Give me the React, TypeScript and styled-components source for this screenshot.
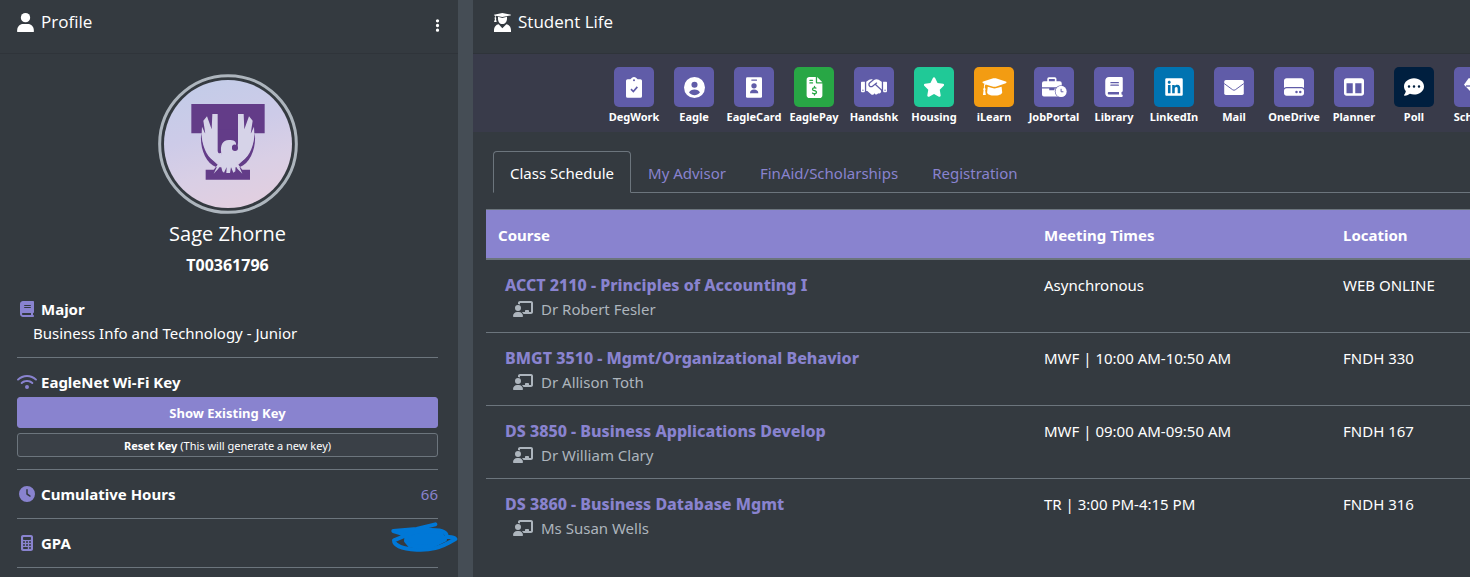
import React from "react";
import type { ReactNode } from "react";
import styled, { createGlobalStyle } from "styled-components";
import {
  FaBook,
  FaCalculator,
  FaChalkboardUser,
  FaClock,
  FaCommentDots,
  FaEllipsisVertical,
  FaFileInvoiceDollar,
  FaHandshake,
  FaHardDrive,
  FaLinkedin,
  FaStar,
  FaTableColumns,
  FaWifi,
} from "react-icons/fa6";

const color = {
  page: "#454d55",
  card: "#343a40",
  line: "#6c757d",
  accent: "#8983cf",
  tile: "#605ca8",
  strip: "#393b4a",
  muted: "#adb5bd",
  white: "#ffffff",
};

const GlobalStyle = createGlobalStyle`
  *, *::before, *::after { box-sizing: border-box; }
  body {
    margin: 0;
    background: ${color.page};
    color: ${color.white};
    font-family: "Noto Sans", "Open Sans", sans-serif;
    font-size: 15px;
    line-height: 24px;
    overflow: hidden;
  }
`;

const Page = styled.div`
  display: flex;
  gap: 15px;
  min-height: 100vh;
`;

const Card = styled.section`
  background: ${color.card};
  min-width: 0;
`;

const ProfileCard = styled(Card)`
  flex: 0 0 458px;
`;

const LifeCard = styled(Card)`
  flex: 1;
  overflow: hidden;
`;

const CardHeader = styled.header`
  display: flex;
  justify-content: space-between;
  height: 54px;
  padding: 10px 13px 0 17px;
  border-bottom: 1px solid #2f343a;
`;

const LifeHeader = styled(CardHeader)`
  padding-left: 21px;
`;

const CardTitle = styled.h2`
  display: flex;
  align-items: center;
  gap: 7px;
  margin: 0;
  height: 24px;
  font-family: "Open Sans", sans-serif;
  font-size: 17px;
  font-weight: 400;
`;

const MenuButton = styled.button`
  display: flex;
  align-items: center;
  height: 31px;
  padding: 0;
  border: 0;
  background: none;
  color: ${color.white};
`;

const ProfileBody = styled.div`
  padding: 20px 20px 0 17px;
`;

const Identity = styled.div`
  display: flex;
  flex-direction: column;
  align-items: center;
  margin-bottom: 20px;
`;

const Name = styled.h3`
  margin: 6px 0 5px;
  font-family: "Open Sans", sans-serif;
  font-size: 20px;
  line-height: 28px;
  font-weight: 400;
`;

const StudentId = styled.p`
  margin: 0;
  font-size: 16px;
  font-weight: 700;
`;

const Item = styled.div`
  padding-bottom: 12px;
  margin-bottom: 12px;
  border-bottom: 1px solid ${color.line};
`;

const ItemRow = styled.div`
  display: flex;
  justify-content: space-between;
`;

const ItemTitle = styled.h4`
  display: flex;
  align-items: center;
  gap: 4px;
  margin: 0;
  font-size: 15px;
  font-weight: 700;
`;

const IconSlot = styled.span`
  display: flex;
  justify-content: center;
  width: 20px;
  color: ${color.accent};
`;

const MajorText = styled.p`
  margin: 0 0 0 16px;
`;

const Value = styled.span`
  position: relative;
  color: ${color.accent};
`;

const Scribble = styled.svg`
  position: absolute;
  right: -20px;
  top: -10px;
`;

const KeyButton = styled.button<{ $primary?: boolean }>`
  display: block;
  width: 100%;
  height: ${(p) => (p.$primary ? 31 : 24)}px;
  margin-top: ${(p) => (p.$primary ? 3 : 5)}px;
  padding: 0;
  border: 1px solid ${(p) => (p.$primary ? color.accent : color.line)};
  border-radius: 3px;
  background: ${(p) => (p.$primary ? color.accent : "#3a4047")};
  color: ${color.white};
  font-family: inherit;
  font-size: ${(p) => (p.$primary ? 13 : 11)}px;
  font-weight: ${(p) => (p.$primary ? 700 : 400)};
`;

const AppStrip = styled.nav`
  display: flex;
  height: 78px;
  padding: 13px 0 0 131px;
  background: ${color.strip};
`;

const AppLink = styled.a`
  display: flex;
  flex: 0 0 60px;
  flex-direction: column;
  align-items: center;
  color: ${color.white};
  font-size: 11px;
  line-height: 20px;
  font-weight: 700;
  text-decoration: none;
  white-space: nowrap;
`;

const Tile = styled.span<{ $bg: string }>`
  display: flex;
  align-items: center;
  justify-content: center;
  width: 40px;
  height: 40px;
  border-radius: 5px;
  background: ${(p) => p.$bg};
  color: ${color.white};
`;

const Tabs = styled.div`
  display: flex;
  margin: 19px 0 16px 20px;
  border-bottom: 1px solid ${color.line};
`;

const Tab = styled.button<{ $active?: boolean }>`
  height: 42px;
  margin-bottom: -1px;
  padding: 1px 16px 0;
  border: 1px solid ${(p) => (p.$active ? color.line : "transparent")};
  border-bottom-color: ${(p) => (p.$active ? color.card : "transparent")};
  border-radius: 4px 4px 0 0;
  background: none;
  color: ${(p) => (p.$active ? color.white : color.accent)};
  font: inherit;
`;

const TableWrap = styled.div`
  padding-left: 13px;
`;

const Table = styled.table`
  width: 100%;
  table-layout: fixed;
  border-collapse: collapse;
`;

const CourseCol = styled.col`
  width: 546px;
`;

const TimeCol = styled.col`
  width: 299px;
`;

const Th = styled.th`
  height: 49px;
  padding: 2px 12px 0;
  border-top: 1px solid ${color.line};
  border-bottom: 2px solid ${color.line};
  background: ${color.accent};
  text-align: left;
  font-weight: 700;
`;

const Td = styled.td`
  height: 73px;
  padding: 13px 12px 11px;
  border-top: 1px solid ${color.line};
  vertical-align: top;
`;

const CourseLink = styled.a`
  display: block;
  padding-left: 7px;
  color: ${color.accent};
  font-size: 16px;
  font-weight: 800;
  text-decoration: none;
`;

const Teacher = styled.span`
  display: flex;
  align-items: center;
  gap: 8px;
  padding-left: 15px;
  color: ${color.muted};
`;

type GlyphProps = { width: number; height: number; box: string; children: ReactNode };

function Glyph({ width, height, box, children }: GlyphProps) {
  return (
    <svg width={width} height={height} viewBox={box} fill="currentColor" aria-hidden="true">
      {children}
    </svg>
  );
}

const userIcon = (
  <Glyph width={17} height={19} box="0 0 50 57">
    <circle cx="25" cy="14" r="14" />
    <path d="M0 57V52C0 41 8 33 18 33H32C42 33 50 41 50 52V57Z" />
  </Glyph>
);

const graduateIcon = (
  <Glyph width={17} height={19} box="0 0 51 57">
    <path d="M0 5L25 0L51 5V7L25 12L5 8V13C7 14 7 17 6 18L8 27H0L3 18C1 16 1 14 3 13V8L0 7Z" />
    <path d="M12 11L25 15L39 11V17C39 26 33 33 25 33S12 26 12 17Z" />
    <path d="M0 57V52C0 42 6 35 14 34L25 46L37 34C45 35 51 42 51 52V57Z" />
  </Glyph>
);

const clipboardIcon = (
  <Glyph width={16} height={21} box="0 0 48 62">
    <path d="M5 6H13L18 2C21 -1 27 -1 30 2L35 6H43Q48 6 48 11V57Q48 62 43 62H5Q0 62 0 57V11Q0 6 5 6Z" />
    <circle cx="24" cy="9" r="3" fill={color.tile} />
    <path d="M15 36L22 43L34 29" fill="none" stroke={color.tile} strokeWidth="5" />
  </Glyph>
);

const accountIcon = (
  <Glyph width={21} height={21} box="0 0 62 62">
    <circle cx="31" cy="31" r="31" />
    <circle cx="31" cy="23" r="9" fill={color.tile} />
    <path d="M15 46C17 40 24 37 31 37S45 40 47 46C42 52 37 54 31 54S20 52 15 46Z" fill={color.tile} />
  </Glyph>
);

const cardIcon = (
  <Glyph width={16} height={21} box="0 0 48 62">
    <rect width="48" height="62" rx="4" />
    <g fill={color.tile}>
      <rect x="16" y="7" width="17" height="4" rx="1" />
      <circle cx="24" cy="26" r="8" />
      <path d="M12 48C12 41 17 37 24 37S37 41 37 48Z" />
    </g>
  </Glyph>
);

const capIcon = (
  <Glyph width={25} height={18} box="0 0 76 56">
    <path d="M3 11L34 1Q38 0 42 1L73 11Q78 13 73 16L42 27Q38 28 34 27L11 20C8 21 8 26 8 31Q12 34 9 38L11 53H2L4 38Q1 34 5 31C5 26 5 22 7 18L3 16Q-2 13 3 11Z" />
    <path d="M17 27L34 32Q38 33 42 32L60 27L62 45C60 58 16 58 15 45Z" />
  </Glyph>
);

const jobIcon = (
  <Glyph width={25} height={21} box="0 0 76 62">
    <path d="M16 12V5Q16 0 21 0H39Q44 0 44 5V12H54Q60 12 60 18V30H0V18Q0 12 6 12ZM21 12H39V5H21Z" fillRule="evenodd" />
    <path d="M0 34H22V39H38V34H60V58H6Q0 58 0 52Z" />
    <circle cx="58" cy="43" r="19" fill={color.tile} />
    <circle cx="58" cy="43" r="17" />
    <path d="M58 35V44H65" fill="none" stroke={color.tile} strokeWidth="3" />
  </Glyph>
);

const mailIcon = (
  <Glyph width={20} height={15} box="0 0 60 46">
    <rect width="60" height="46" rx="5" />
    <path d="M0 11L26 30Q30 33 34 30L60 11" fill="none" stroke={color.tile} strokeWidth="3" />
  </Glyph>
);

const gemIcon = (
  <Glyph width={21} height={18} box="0 0 64 54">
    <path d="M14 0H50L64 20L32 54L0 20Z" />
    <path d="M6 24H58" fill="none" stroke={color.tile} strokeWidth="4" />
  </Glyph>
);

function Avatar() {
  return (
    <svg width="140" height="140" viewBox="24 24 420 420" role="img" aria-label="University logo">
      <defs>
        <linearGradient id="sky" x1="0.3" y1="0" x2="0.6" y2="1">
          <stop offset="0" stopColor="#c3cce8" />
          <stop offset="0.4" stopColor="#cdcbe8" />
          <stop offset="0.7" stopColor="#d9cfe5" />
          <stop offset="1" stopColor="#e2cfe0" />
        </linearGradient>
      </defs>
      <circle cx="234" cy="234" r="205" fill="none" stroke="#adb5bd" strokeWidth="9" />
      <circle cx="234" cy="234" r="192" fill="url(#sky)" />
      <g fill="#633c88">
        <path d="M124 114H344V202H124Z" />
        <path d="M201 190H265V270H201Z" />
        <path d="M167 311H191L203 296L190 284C168 268 156 238 154 200C148 240 164 292 200 304H268C304 292 320 240 314 200C312 238 300 268 278 284L265 296L277 311H300V341H167Z" />
      </g>
      <g fill="#d6d3e8">
        <path d="M187 144H203V254C203 262 210 264 215 259V285L205 289C178 285 158 245 155 202L156 182L166 204L160 164L171 151L185 190Z" />
        <path d="M281 144H264V230L258 285L266 289C290 285 310 245 313 202L312 182L302 204L308 164L297 151L283 190Z" />
        <path d="M214 262C210 239 217 222 237 222C250 222 260 226 258 237C251 233 245 239 246 246C247 252 255 256 264 249C263 265 262 275 258 287L268 302L277 323L262 308L257 296L256 316L250 320L243 303L240 321H229L230 303L222 320L217 316L212 296L205 308L191 323L201 302L211 285Z" />
      </g>
      <circle cx="255" cy="246" r="9" fill="#633c88" />
    </svg>
  );
}

type AppItem = { label: string; icon: ReactNode; bg?: string };

const apps: AppItem[] = [
  { label: "DegWork", icon: clipboardIcon },
  { label: "Eagle", icon: accountIcon },
  { label: "EagleCard", icon: cardIcon },
  { label: "EaglePay", icon: <FaFileInvoiceDollar size={21} />, bg: "#28a745" },
  { label: "Handshk", icon: <FaHandshake size={26} /> },
  { label: "Housing", icon: <FaStar size={22} />, bg: "#20c997" },
  { label: "iLearn", icon: capIcon, bg: "#f39c12" },
  { label: "JobPortal", icon: jobIcon },
  { label: "Library", icon: <FaBook size={20} /> },
  { label: "LinkedIn", icon: <FaLinkedin size={20} />, bg: "#0073b1" },
  { label: "Mail", icon: mailIcon },
  { label: "OneDrive", icon: <FaHardDrive size={20} /> },
  { label: "Planner", icon: <FaTableColumns size={20} /> },
  { label: "Poll", icon: <FaCommentDots size={20} />, bg: "#001f3f" },
  { label: "Scholar", icon: gemIcon },
];

const tabs = ["Class Schedule", "My Advisor", "FinAid/Scholarships", "Registration"];

const courses = [
  { name: "ACCT 2110 - Principles of Accounting I", teacher: "Dr Robert Fesler", time: "Asynchronous", place: "WEB ONLINE" },
  { name: "BMGT 3510 - Mgmt/Organizational Behavior", teacher: "Dr Allison Toth", time: "MWF | 10:00 AM-10:50 AM", place: "FNDH 330" },
  { name: "DS 3850 - Business Applications Develop", teacher: "Dr William Clary", time: "MWF | 09:00 AM-09:50 AM", place: "FNDH 167" },
  { name: "DS 3860 - Business Database Mgmt", teacher: "Ms Susan Wells", time: "TR | 3:00 PM-4:15 PM", place: "FNDH 316" },
];

export default function App() {
  return (
    <>
      <GlobalStyle />
      <Page>
        <ProfileCard>
          <CardHeader>
            <CardTitle>
              {userIcon}
              Profile
            </CardTitle>
            <MenuButton type="button" aria-label="Profile options">
              <FaEllipsisVertical size={15} />
            </MenuButton>
          </CardHeader>
          <ProfileBody>
            <Identity>
              <Avatar />
              <Name>Sage Zhorne</Name>
              <StudentId>T00361796</StudentId>
            </Identity>
            <Item>
              <ItemTitle>
                <IconSlot><FaBook size={16} /></IconSlot>
                Major
              </ItemTitle>
              <MajorText>Business Info and Technology - Junior</MajorText>
            </Item>
            <Item>
              <ItemTitle>
                <IconSlot><FaWifi size={20} /></IconSlot>
                EagleNet Wi-Fi Key
              </ItemTitle>
              <KeyButton type="button" $primary>Show Existing Key</KeyButton>
              <KeyButton type="button">
                <b>Reset Key</b> (This will generate a new key)
              </KeyButton>
            </Item>
            <Item>
              <ItemRow>
                <ItemTitle>
                  <IconSlot><FaClock size={16} /></IconSlot>
                  Cumulative Hours
                </ItemTitle>
                <Value>66</Value>
              </ItemRow>
            </Item>
            <Item>
              <ItemRow>
                <ItemTitle>
                  <IconSlot><FaCalculator size={16} /></IconSlot>
                  GPA
                </ItemTitle>
                <Value>
                  <Scribble width="68" height="32" viewBox="0 0 204 96" aria-hidden="true">
                    <g fill="none" stroke="#0078d7" strokeLinecap="round" strokeLinejoin="round" strokeWidth="12">
                      <path d="M136 10L80 24L10 30L50 42L12 58C12 74 40 84 80 86C120 88 150 82 196 54C190 46 180 48 170 48C172 30 150 26 110 26L40 36" />
                      <path d="M50 40L90 30L150 34L165 56L120 78L60 74L48 60Z" fill="#0078d7" />
                    </g>
                  </Scribble>
                </Value>
              </ItemRow>
            </Item>
          </ProfileBody>
        </ProfileCard>
        <LifeCard>
          <LifeHeader>
            <CardTitle>
              {graduateIcon}
              Student Life
            </CardTitle>
          </LifeHeader>
          <AppStrip>
            {apps.map(({ label, icon, bg }) => (
              <AppLink href="#" key={label}>
                <Tile $bg={bg ?? color.tile}>{icon}</Tile>
                {label}
              </AppLink>
            ))}
          </AppStrip>
          <Tabs role="tablist">
            {tabs.map((tab, i) => (
              <Tab key={tab} type="button" role="tab" aria-selected={i === 0} $active={i === 0}>
                {tab}
              </Tab>
            ))}
          </Tabs>
          <TableWrap>
            <Table>
              <colgroup>
                <CourseCol />
                <TimeCol />
                <col />
              </colgroup>
              <thead>
                <tr>
                  <Th>Course</Th>
                  <Th>Meeting Times</Th>
                  <Th>Location</Th>
                </tr>
              </thead>
              <tbody>
                {courses.map((c) => (
                  <tr key={c.name}>
                    <Td>
                      <CourseLink href="#">{c.name}</CourseLink>
                      <Teacher>
                        <FaChalkboardUser size={20} />
                        {c.teacher}
                      </Teacher>
                    </Td>
                    <Td>{c.time}</Td>
                    <Td>{c.place}</Td>
                  </tr>
                ))}
              </tbody>
            </Table>
          </TableWrap>
        </LifeCard>
      </Page>
    </>
  );
}
